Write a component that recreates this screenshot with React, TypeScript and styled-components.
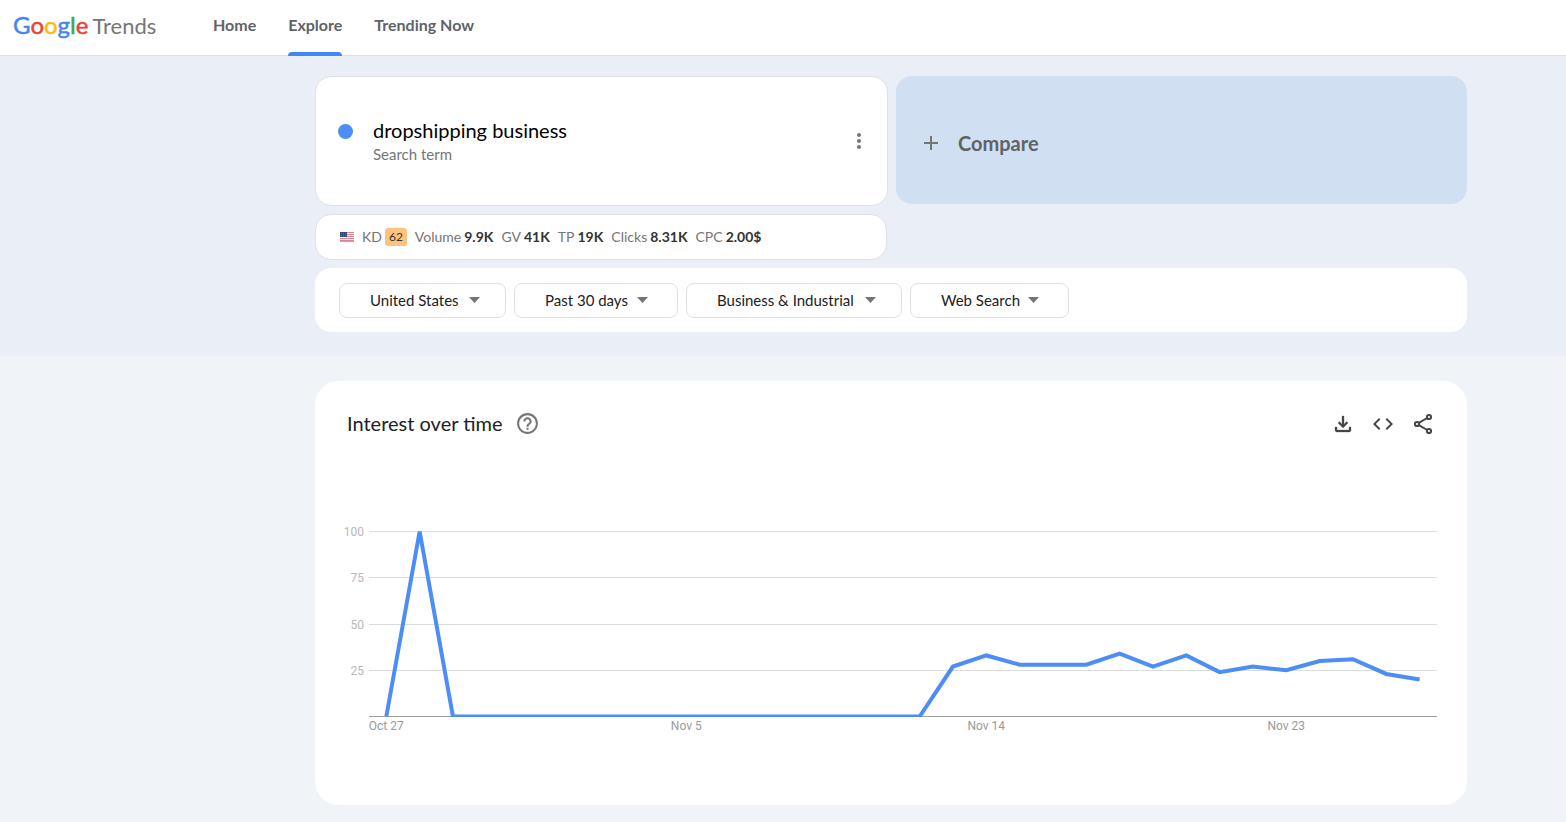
import React from 'react';
import styled, { createGlobalStyle } from 'styled-components';
import { MdCode, MdHelpOutline, MdMoreVert } from 'react-icons/md';

const sans = `Lato, 'Open Sans', 'Liberation Sans', sans-serif`;

const GlobalStyle = createGlobalStyle`
  *, *::before, *::after { box-sizing: border-box; }
  body {
    margin: 0;
    background: #f0f4f9;
    color: #202124;
    font-family: ${sans};
  }
  button, select { font-family: inherit; }
`;

const Header = styled.header`
  display: flex;
  align-items: stretch;
  height: 56px;
  padding-left: 13px;
  background: #fff;
  border-bottom: 1px solid #dfe1e5;
`;

const Logo = styled.a`
  display: flex;
  align-items: baseline;
  gap: 4px;
  width: 184px;
  padding-top: 9px;
  color: #757575;
  font-size: 22px;
  line-height: 32px;
  text-decoration: none;
`;

const Wordmark = styled.span`
  font-size: 24px;
`;

const Letter = styled.span<{ $color: string }>`
  color: ${(p) => p.$color};
  -webkit-text-stroke: 0.5px ${(p) => p.$color};
`;

const Nav = styled.nav`
  display: flex;
  gap: 32px;
  margin-left: 16px;
`;

const NavLink = styled.a<{ $active?: boolean }>`
  position: relative;
  padding-top: 13px;
  color: #5f6368;
  font-size: 16px;
  font-weight: 700;
  line-height: 24px;
  text-decoration: none;

  &::after {
    content: '';
    display: ${(p) => (p.$active ? 'block' : 'none')};
    position: absolute;
    left: 0;
    right: 0;
    bottom: -1px;
    height: 4px;
    border-radius: 4px 4px 0 0;
    background: #4285f4;
  }
`;

const Hero = styled.section`
  display: flex;
  flex-direction: column;
  gap: 8px;
  padding: 20px 99px 24px 315px;
  background: #e9eef7;
`;

const TermRow = styled.div`
  display: flex;
  align-items: flex-start;
  gap: 8px;
`;

const TermCard = styled.div`
  box-sizing: content-box;
  flex: 1;
  display: flex;
  align-items: center;
  height: 128px;
  background: #fff;
  border: 1px solid #e0e1e4;
  border-radius: 16px;
`;

const TermText = styled.div`
  flex: 1;
  display: grid;
  grid-template-columns: 15px 1fr;
  column-gap: 20px;
  align-items: end;
  padding: 0 0 2px 22px;
`;

const Dot = styled.span`
  height: 15px;
  margin-bottom: 5px;
  border-radius: 50%;
  background: #4c8df6;
`;

const TermName = styled.span`
  color: #000;
  font-size: 20px;
  line-height: 28px;
`;

const TermKind = styled.span`
  grid-column: 2;
  color: #757575;
  font-size: 15px;
  line-height: 20px;
`;

const IconButton = styled.button`
  display: flex;
  align-items: center;
  justify-content: center;
  width: 40px;
  height: 40px;
  padding: 0;
  border: 0;
  background: none;
  color: #444746;
`;

const MenuButton = styled(IconButton)`
  margin-right: 8px;
  color: #757575;
`;

const CompareButton = styled.button`
  flex: 1;
  display: flex;
  align-items: center;
  gap: 20px;
  height: 128px;
  padding: 6px 0 0;
  border: 0;
  border-radius: 16px;
  background: #d1dff2;
  color: #5f6368;
  font-size: 20px;
  font-weight: 700;
  line-height: 28px;

  svg {
    margin-left: 28px;
  }
`;

const Stats = styled.div`
  display: flex;
  align-items: center;
  gap: 8px;
  width: calc(50% - 4px);
  height: 46px;
  padding: 0 24px;
  background: #fff;
  border: 1px solid #e0e1e4;
  border-radius: 16px;
  color: #757575;
  font-size: 14px;
  line-height: 20px;
  white-space: nowrap;
`;

const Stat = styled.span`
  display: flex;
  align-items: center;
  gap: 3px;
`;

const StatValue = styled.strong`
  color: #333;
  font-weight: 700;
`;

const Difficulty = styled.span`
  padding: 0 4px;
  border-radius: 3px;
  background: #ffc381;
  color: #333;
  font-size: 12px;
  line-height: 18px;
`;

const Filters = styled.div`
  display: flex;
  align-items: center;
  gap: 8px;
  height: 64px;
  padding: 0 24px;
  background: #fff;
  border-radius: 16px;
`;

const FilterBox = styled.label<{ $width: number; $end: number }>`
  display: flex;
  align-items: center;
  justify-content: space-between;
  width: ${(p) => p.$width}px;
  height: 35px;
  padding: 0 ${(p) => p.$end}px 0 30px;
  border: 1px solid #dfe1e5;
  border-radius: 8px;
`;

const FilterSelect = styled.select`
  appearance: none;
  flex: 1;
  padding: 0;
  border: 0;
  background: none;
  color: #202124;
  font-size: 15px;
  line-height: 20px;
`;

const Panel = styled.section`
  margin: 25px 99px 17px 315px;
  padding: 22px 24px 69px 28px;
  background: #fff;
  border-radius: 24px;
`;

const PanelHead = styled.div`
  display: flex;
  align-items: center;
  height: 40px;
  padding-left: 4px;
`;

const PanelTitle = styled.h2`
  margin: 0;
  color: #202124;
  font-size: 20px;
  font-weight: 400;
  line-height: 28px;
`;

const HelpButton = styled(IconButton)`
  margin-left: 5px;
  color: #757575;
`;

const Actions = styled.div`
  display: flex;
  margin-left: auto;
  padding-top: 2px;
`;

const ChartArea = styled.div`
  padding: 79px 6px 0 0;
`;

const Chart = styled.svg`
  display: block;
  width: 100%;
  height: auto;
  font-family: Roboto, 'Liberation Sans', sans-serif;
  font-size: 12px;
`;

const UsFlag = () => (
  <svg width="14" height="10" viewBox="0 0 14 10" role="img" aria-label="United States">
    <rect width="14" height="10" fill="#f5eef0" />
    {[0, 2, 4, 6, 8].map((y) => (
      <rect key={y} y={y} width="14" height="1" fill="#d98490" />
    ))}
    <rect y="9" width="14" height="1" fill="#dc9ba5" />
    <rect width="7" height="5" fill="#364a78" />
    <path d="M1 1.5h5M1 3.5h5" stroke="#64749a" strokeDasharray="1 1" />
  </svg>
);

const Caret = () => (
  <svg width="11" height="6" viewBox="0 0 11 6" aria-hidden="true">
    <path d="M0 0h11L5.5 6z" fill="#757575" />
  </svg>
);

const PlusIcon = () => (
  <svg width="14" height="14" viewBox="0 0 14 14" aria-hidden="true">
    <path d="M7 0v14M0 7h14" stroke="#757575" strokeWidth="2" />
  </svg>
);

const DownloadIcon = () => (
  <svg width="24" height="24" viewBox="0 0 24 24" fill="currentColor" aria-hidden="true">
    <path
      d="M12 16l-5-5 1.4-1.45 2.6 2.6V4h2v8.15l2.6-2.6L17 11l-5 5zM6 20q-.825 0-1.412-.587Q4 18.825 4 18v-3h2v3h12v-3h2v3q0 .825-.587 1.413Q18.825 20 18 20H6z"
      stroke="currentColor"
      strokeWidth="0.3"
    />
  </svg>
);

const ShareIcon = () => (
  <svg
    width="24"
    height="24"
    viewBox="0 0 24 24"
    fill="none"
    stroke="currentColor"
    strokeWidth="2"
    aria-hidden="true"
  >
    <circle cx="18" cy="5" r="2.1" />
    <circle cx="6" cy="12" r="2.1" />
    <circle cx="18" cy="19" r="2.1" />
    <path d="M7.8 10.9l8.4-4.9M7.8 13.1l8.4 4.9" />
  </svg>
);

const wordmark: [string, string][] = [
  ['G', '#4285f4'],
  ['o', '#ea4335'],
  ['o', '#fbbc05'],
  ['g', '#4285f4'],
  ['l', '#34a853'],
  ['e', '#ea4335'],
];

const stats: [string, string][] = [
  ['Volume', '9.9K'],
  ['GV', '41K'],
  ['TP', '19K'],
  ['Clicks', '8.31K'],
  ['CPC', '2.00$'],
];

const filters = [
  { name: 'Region', value: 'United States', width: 167, end: 25 },
  { name: 'Time range', value: 'Past 30 days', width: 164, end: 29 },
  { name: 'Category', value: 'Business & Industrial', width: 216, end: 25 },
  { name: 'Search type', value: 'Web Search', width: 159, end: 29 },
];

const interest = [
  0, 100, 0, 0, 0, 0, 0, 0, 0, 0, 0, 0, 0, 0, 0, 0, 0, 27, 33, 28, 28, 28, 34, 27, 33, 24, 27, 25,
  30, 31, 23, 20,
];

const gridLines = [
  { label: '100', y: 9.5 },
  { label: '75', y: 55.5 },
  { label: '50', y: 102.5 },
  { label: '25', y: 148.5 },
];

const dates = [
  { label: 'Oct 27', day: 0 },
  { label: 'Nov 5', day: 9 },
  { label: 'Nov 14', day: 18 },
  { label: 'Nov 23', day: 27 },
];

const dayX = (day: number) => 43.3 + (day * 100) / 3;
const valueY = (value: number) => 194.5 - value * 1.85;

const InterestChart = () => (
  <Chart viewBox="0 0 1094 214" role="img" aria-label="Interest over time">
    <clipPath id="plot">
      <rect x="26" y="9" width="1068" height="186" />
    </clipPath>
    {gridLines.map(({ label, y }) => (
      <g key={label}>
        <line x1="26" x2="1094" y1={y} y2={y} stroke="#dcdcdc" />
        <text x="21" y={y + 4} textAnchor="end" fill="#b8b8b8">
          {label}
        </text>
      </g>
    ))}
    <line x1="26" x2="1094" y1="194.5" y2="194.5" stroke="#9e9e9e" />
    <polyline
      points={interest.map((value, day) => `${dayX(day)},${valueY(value)}`).join(' ')}
      fill="none"
      stroke="#4c8df6"
      strokeWidth="4"
      clipPath="url(#plot)"
    />
    {dates.map(({ label, day }) => (
      <text key={label} x={dayX(day)} y="208" textAnchor="middle" fill="#9a9a9a">
        {label}
      </text>
    ))}
  </Chart>
);

export default function App() {
  return (
    <>
      <GlobalStyle />
      <Header>
        <Logo href="#">
          <Wordmark>
            {wordmark.map(([char, color], i) => (
              <Letter key={i} $color={color}>
                {char}
              </Letter>
            ))}
          </Wordmark>
          <span>Trends</span>
        </Logo>
        <Nav>
          <NavLink href="#home">Home</NavLink>
          <NavLink href="#explore" $active>
            Explore
          </NavLink>
          <NavLink href="#trending">Trending Now</NavLink>
        </Nav>
      </Header>
      <main>
        <Hero>
          <TermRow>
            <TermCard>
              <TermText>
                <Dot />
                <TermName>dropshipping business</TermName>
                <TermKind>Search term</TermKind>
              </TermText>
              <MenuButton aria-label="More options">
                <MdMoreVert size={24} />
              </MenuButton>
            </TermCard>
            <CompareButton>
              <PlusIcon />
              Compare
            </CompareButton>
          </TermRow>
          <Stats>
            <UsFlag />
            <Stat>
              KD <Difficulty>62</Difficulty>
            </Stat>
            {stats.map(([label, value]) => (
              <Stat key={label}>
                {label} <StatValue>{value}</StatValue>
              </Stat>
            ))}
          </Stats>
          <Filters>
            {filters.map(({ name, value, width, end }) => (
              <FilterBox key={name} $width={width} $end={end}>
                <FilterSelect aria-label={name}>
                  <option>{value}</option>
                </FilterSelect>
                <Caret />
              </FilterBox>
            ))}
          </Filters>
        </Hero>
        <Panel>
          <PanelHead>
            <PanelTitle>Interest over time</PanelTitle>
            <HelpButton aria-label="Help">
              <MdHelpOutline size={25} />
            </HelpButton>
            <Actions>
              <IconButton aria-label="Download">
                <DownloadIcon />
              </IconButton>
              <IconButton aria-label="Embed">
                <MdCode size={24} />
              </IconButton>
              <IconButton aria-label="Share">
                <ShareIcon />
              </IconButton>
            </Actions>
          </PanelHead>
          <ChartArea>
            <InterestChart />
          </ChartArea>
        </Panel>
      </main>
    </>
  );
}
